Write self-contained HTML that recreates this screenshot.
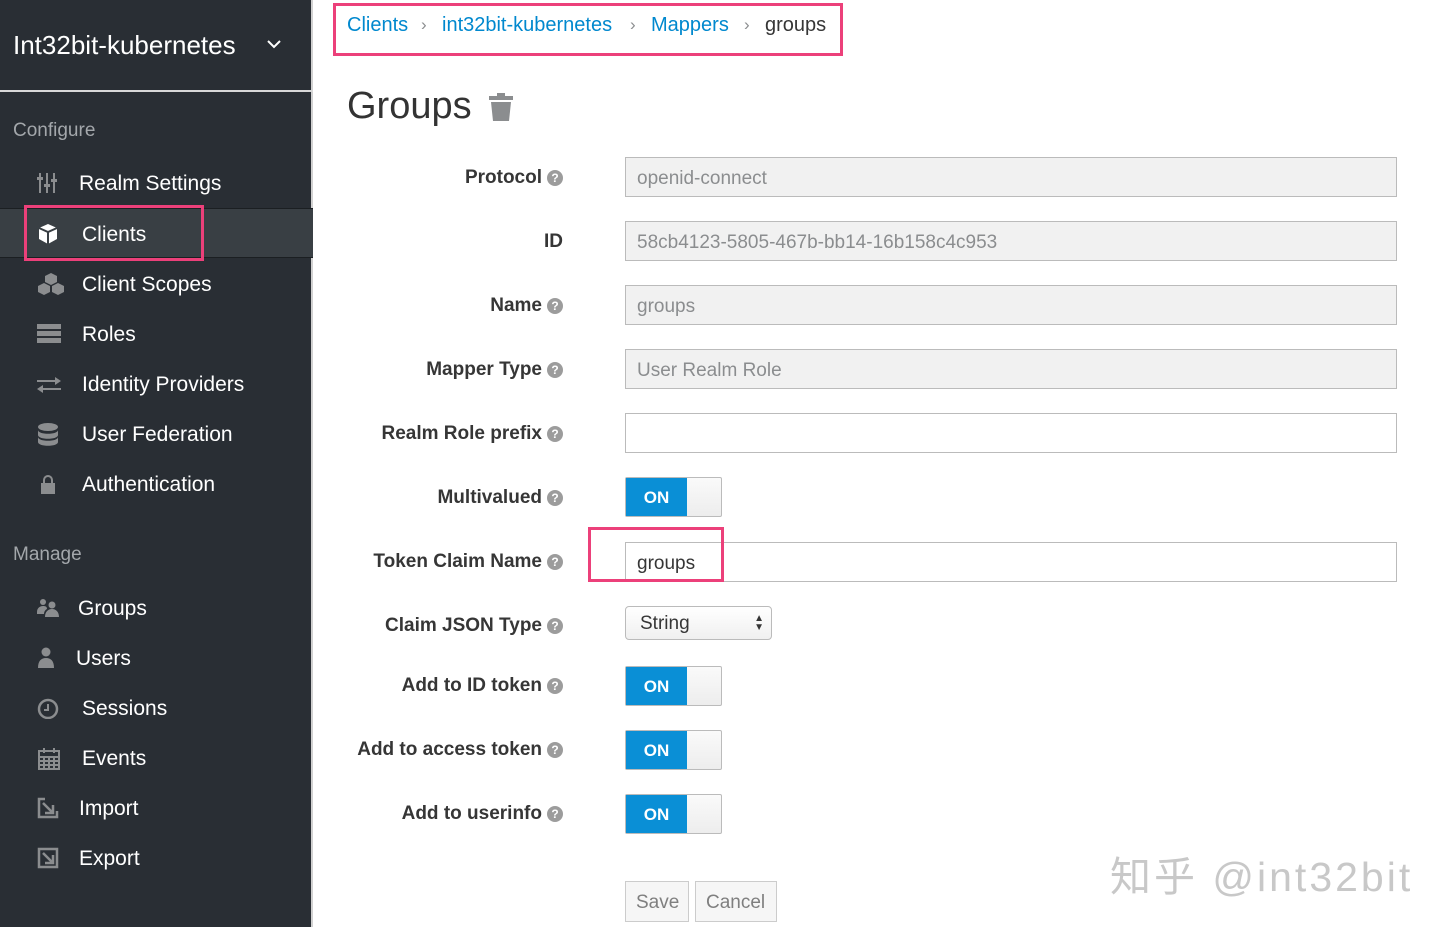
<!DOCTYPE html>
<html><head><meta charset="utf-8">
<style>
*{box-sizing:border-box;margin:0;padding:0}
body{width:1440px;height:927px;position:relative;overflow:hidden;background:#fff;font-family:"Liberation Sans","Noto Sans CJK SC",sans-serif;}
.sb{position:absolute;left:0;top:0;width:313px;height:927px;background:#292e34;border-right:2px solid #d1d1d1;}
.realm{position:absolute;left:13px;top:30px;color:#fff;font-size:26px;}
.chev{position:absolute;left:266px;top:38px;}
.hline{position:absolute;left:0;top:90px;width:313px;height:2px;background:#d8d8d8;}
.sec{position:absolute;left:13px;color:#a3a7ab;font-size:19px;}
.it{position:absolute;left:0;width:313px;height:50px;color:#fff;font-size:21px;}
.it span{position:absolute;top:14px;}
.it svg{position:absolute;left:37px;top:14px;}
.act{background:#393f44;border-top:1px solid #1b1f22;border-bottom:1px solid #1b1f22;}
.pink{position:absolute;border:3px solid #ec407a;}
.bc{position:absolute;top:14px;font-size:20px;color:#0088ce;}
.sep{position:absolute;top:15px;font-size:17px;color:#8b8d8f;}
h1{position:absolute;left:347px;top:85px;font-size:38px;font-weight:normal;color:#333;}
.lbl{position:absolute;right:877px;font-size:19px;font-weight:bold;color:#363636;text-align:right;white-space:nowrap;}
.q{display:inline-block;width:16px;height:16px;border-radius:50%;background:#9c9c9c;color:#fff;font-size:12px;line-height:16px;text-align:center;margin-left:5px;vertical-align:1px;font-weight:bold;}
.inp{position:absolute;left:625px;width:772px;height:40px;border:1px solid #bbb;background:#f1f1f1;color:#8b8d8f;font-size:19px;padding:10px 11px;}
.inp.w{background:#fff;color:#363636;}
.tg{position:absolute;left:625px;width:97px;height:40px;border:1px solid #bbb;border-radius:2px;background:linear-gradient(#fafafa,#ededed);}
.tg b{position:absolute;left:0;top:0;width:61px;height:38px;background:#0a8fd6;color:#fff;font-size:17px;text-align:center;line-height:40px;}
.sel{position:absolute;left:625px;top:606px;width:147px;height:34px;border:1px solid #bbb;border-radius:4px;background:linear-gradient(#fff,#f0f0f0);font-size:19px;color:#363636;padding:6px 14px;}
.btn{position:absolute;top:881px;height:41px;border:1px solid #ccc;background:#f6f6f6;color:#7f7f7f;font-size:19px;padding:10px 10px;}
.wm{position:absolute;left:1110px;top:843px;font-size:41px;color:#c8c8c8;letter-spacing:3px;}
</style></head><body>
<div class="sb">
<div class="realm">Int32bit-kubernetes</div>
<svg class="chev" width="16" height="12" viewBox="0 0 16 12"><path d="M2 3l6 6 6-6" stroke="#fff" stroke-width="2" fill="none"/></svg>
<div class="hline"></div>
<div class="sec" style="top:120px">Configure</div>
<div class="it" style="top:158px"><svg width="22" height="22" viewBox="0 0 22 22" fill="#8b8d8f"><rect x="2" y="1" width="2" height="20"/><rect x="9" y="1" width="2" height="20"/><rect x="16" y="1" width="2" height="20"/><rect x="0" y="5" width="6" height="3"/><rect x="7" y="12" width="6" height="3"/><rect x="14" y="7" width="6" height="3"/></svg><span style="left:79px">Realm Settings</span></div>
<div class="it act" style="top:208px"><svg width="22" height="22" viewBox="0 0 22 22"><path d="M11 1l9 4v11l-9 5-9-5V5z" fill="#fff"/><path d="M2 5l9 4 9-4M11 9v12" stroke="#393f44" stroke-width="2" fill="none"/></svg><span style="left:82px">Clients</span></div>
<div class="it" style="top:259px"><svg width="28" height="22" viewBox="0 0 28 22" fill="#8b8d8f"><path d="M14 0l6 3v6l-6 3-6-3V3z"/><path d="M7 10l6 3v6l-6 3-6-3v-6z"/><path d="M21 10l6 3v6l-6 3-6-3v-6z"/></svg><span style="left:82px">Client Scopes</span></div>
<div class="it" style="top:309px"><svg width="24" height="22" viewBox="0 0 24 22" fill="#8b8d8f"><rect y="1" width="24" height="5"/><rect y="8" width="24" height="5"/><rect y="15" width="24" height="5"/></svg><span style="left:82px">Roles</span></div>
<div class="it" style="top:359px"><svg width="24" height="22" viewBox="0 0 24 22" fill="#8b8d8f"><path d="M0 7h18V4l6 4-6 4V9H0zM24 15H6v-3l-6 4 6 4v-3h18z"/></svg><span style="left:82px">Identity Providers</span></div>
<div class="it" style="top:409px"><svg width="22" height="24" viewBox="0 0 22 24" fill="#8b8d8f"><ellipse cx="11" cy="4" rx="10" ry="4"/><path d="M1 7c0 5 20 5 20 0v5c0 5-20 5-20 0zM1 14c0 5 20 5 20 0v5c0 5-20 5-20 0z"/></svg><span style="left:82px">User Federation</span></div>
<div class="it" style="top:459px"><svg width="22" height="22" viewBox="0 0 22 22" fill="#8b8d8f"><path d="M6 10V7a5 5 0 0110 0v3h-2V7a3 3 0 00-6 0v3z"/><rect x="4" y="10" width="14" height="11"/></svg><span style="left:82px">Authentication</span></div>
<div class="sec" style="top:544px">Manage</div>
<div class="it" style="top:583px"><svg width="22" height="22" viewBox="0 0 22 22" fill="#8b8d8f"><circle cx="6" cy="5" r="3"/><circle cx="15" cy="8" r="3.5"/><path d="M0 15c0-4 3-6 6-6s4 1 4 3c-2 1-3 3-3 5H0zM8 20c0-5 3-8 7-8s7 3 7 8z"/></svg><span style="left:78px">Groups</span></div>
<div class="it" style="top:633px"><svg width="22" height="22" viewBox="0 0 22 22" fill="#8b8d8f"><circle cx="9" cy="5" r="4.5"/><path d="M1 21c0-7 3-10 8-10s8 3 8 10z"/></svg><span style="left:76px">Users</span></div>
<div class="it" style="top:683px"><svg width="22" height="22" viewBox="0 0 22 22"><circle cx="11" cy="12" r="9" stroke="#8b8d8f" stroke-width="2.5" fill="none"/><path d="M11 7v6H7" stroke="#8b8d8f" stroke-width="2" fill="none"/></svg><span style="left:82px">Sessions</span></div>
<div class="it" style="top:733px"><svg width="24" height="24" viewBox="0 0 24 24" fill="none" stroke="#8b8d8f" stroke-width="2"><rect x="2" y="4" width="20" height="18"/><path d="M2 10h20M2 14h20M2 18h20M7 10v12M12 10v12M17 10v12M7 1v5M17 1v5"/></svg><span style="left:82px">Events</span></div>
<div class="it" style="top:783px"><svg width="22" height="22" viewBox="0 0 22 22" fill="none" stroke="#8b8d8f" stroke-width="2.5"><path d="M8 2H2v18h18v-6"/><path d="M6 6l10 10M16 8v8H8"/></svg><span style="left:79px">Import</span></div>
<div class="it" style="top:833px"><svg width="22" height="22" viewBox="0 0 22 22" fill="none" stroke="#8b8d8f" stroke-width="2.5"><path d="M2 2h18v18H2z"/><path d="M6 6l10 10M16 8v8H8"/></svg><span style="left:79px">Export</span></div>
<div class="pink" style="left:24px;top:205px;width:180px;height:56px"></div>
</div>

<div class="pink" style="left:333px;top:3px;width:510px;height:53px"></div>
<div class="bc" style="left:347px">Clients</div><div class="sep" style="left:421px">›</div>
<div class="bc" style="left:442px">int32bit-kubernetes</div><div class="sep" style="left:630px">›</div>
<div class="bc" style="left:651px">Mappers</div><div class="sep" style="left:744px">›</div>
<div class="bc" style="left:765px;color:#363636">groups</div>

<h1>Groups</h1>
<svg style="position:absolute;left:488px;top:93px" width="26" height="28" viewBox="0 0 26 28" fill="#8b8d8f"><rect x="1" y="3" width="24" height="4"/><rect x="9" y="0" width="8" height="4"/><path d="M3 9h20l-2 19H5z"/></svg>

<div class="lbl" style="top:167px">Protocol<span class="q">?</span></div>
<div class="inp" style="top:157px">openid-connect</div>
<div class="lbl" style="top:231px">ID</div>
<div class="inp" style="top:221px">58cb4123-5805-467b-bb14-16b158c4c953</div>
<div class="lbl" style="top:295px">Name<span class="q">?</span></div>
<div class="inp" style="top:285px">groups</div>
<div class="lbl" style="top:359px">Mapper Type<span class="q">?</span></div>
<div class="inp" style="top:349px">User Realm Role</div>
<div class="lbl" style="top:423px">Realm Role prefix<span class="q">?</span></div>
<div class="inp w" style="top:413px"></div>
<div class="lbl" style="top:487px">Multivalued<span class="q">?</span></div>
<div class="tg" style="top:477px"><b>ON</b></div>
<div class="lbl" style="top:551px">Token Claim Name<span class="q">?</span></div>
<div class="inp w" style="top:542px">groups</div>
<div class="pink" style="left:588px;top:527px;width:136px;height:55px"></div>
<div class="lbl" style="top:615px">Claim JSON Type<span class="q">?</span></div>
<div class="sel">String<span style="position:absolute;right:7px;top:7px;font-size:10px;line-height:9px">▲<br>▼</span></div>
<div class="lbl" style="top:675px">Add to ID token<span class="q">?</span></div>
<div class="tg" style="top:666px"><b>ON</b></div>
<div class="lbl" style="top:739px">Add to access token<span class="q">?</span></div>
<div class="tg" style="top:730px"><b>ON</b></div>
<div class="lbl" style="top:803px">Add to userinfo<span class="q">?</span></div>
<div class="tg" style="top:794px"><b>ON</b></div>
<div class="btn" style="left:625px;width:64px">Save</div>
<div class="btn" style="left:695px;width:82px">Cancel</div>
<div class="wm">知乎 @int32bit</div>
</body></html>
